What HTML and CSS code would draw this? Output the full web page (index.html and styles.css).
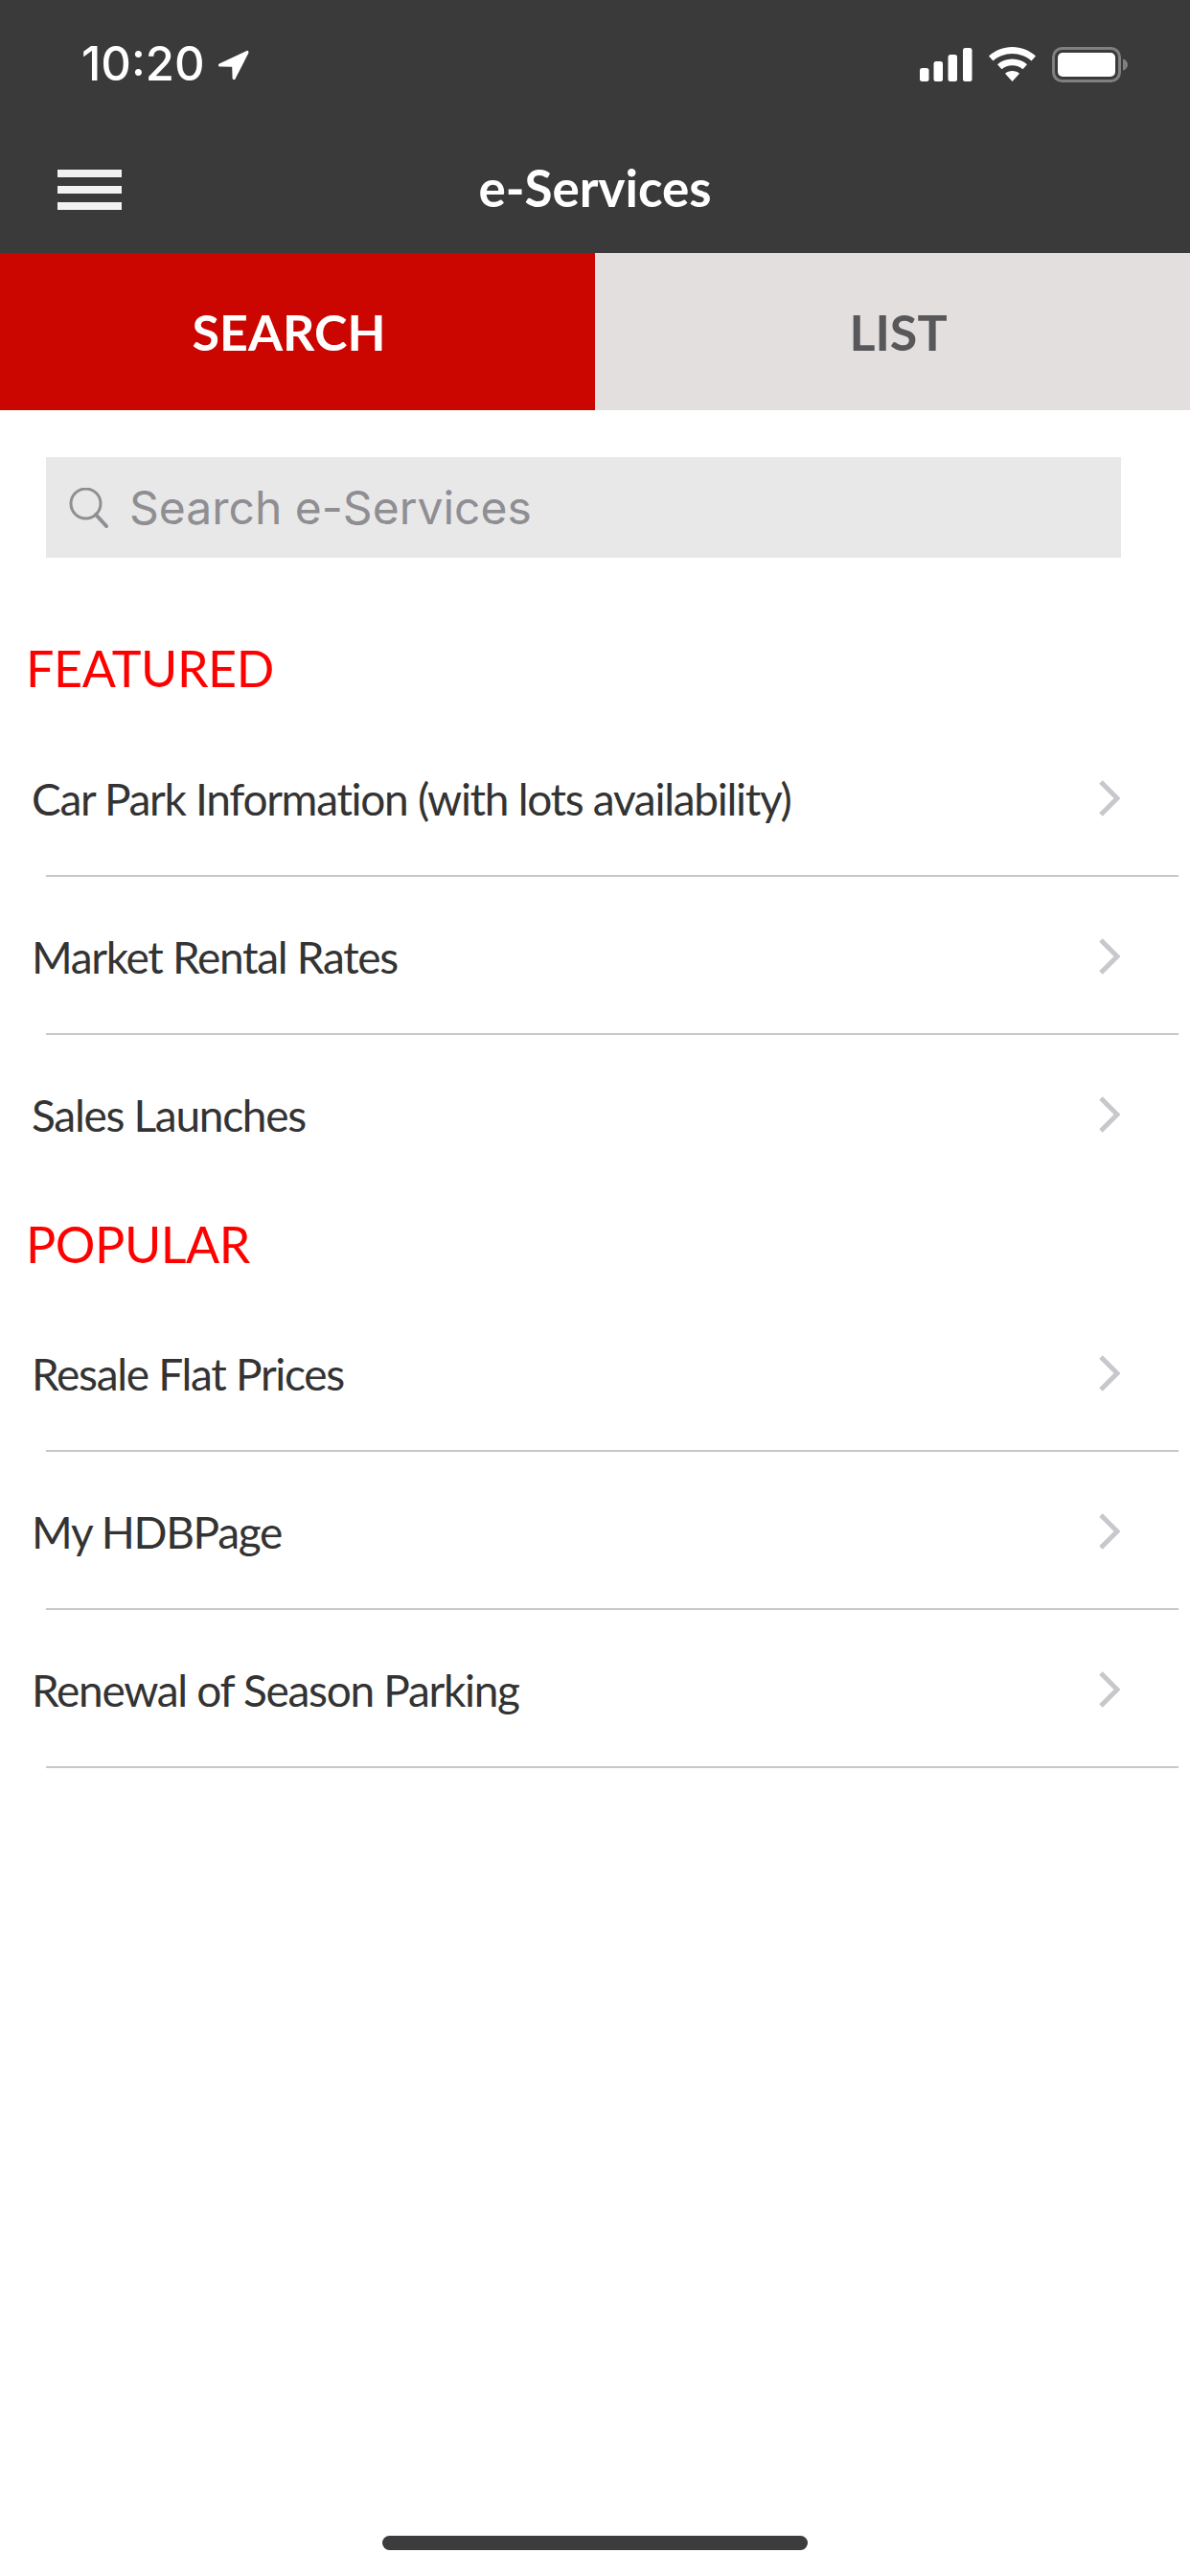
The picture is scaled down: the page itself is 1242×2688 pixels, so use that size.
FILE: index.html
```html
<!DOCTYPE html>
<html lang="en">
<head>
<meta charset="utf-8">
<title>e-Services</title>
<link rel="stylesheet" href="styles.css">
</head>
<body>
<div class="page">
  <header class="top">
    <div class="status">
      <div class="time-wrap">
        <span class="time">10:20</span>
        <svg class="loc" width="33" height="32" viewBox="0 0 33 32"><path d="M30.500 1 1.800 14.500c-1.500.8-1 3 .6 3l12.800.3.4 12c.1 1.500 2.400 2 3 .5L32.300 3.500c.5-1.600-.6-3.100-1.800-2.500z" fill="#fff"/></svg>
      </div>
      <div class="status-icons">
        <svg width="55" height="36" viewBox="0 0 55 36"><g fill="#fff"><rect x="0" y="22" width="9.500" height="14" rx="2.500"/><rect x="14.500" y="15" width="9.500" height="21" rx="2.500"/><rect x="29.500" y="8" width="9.500" height="28" rx="2.500"/><rect x="45" y="1" width="9.500" height="35" rx="2.500"/></g></svg>
        <svg width="49" height="36" viewBox="0 0 49 36"><g fill="#fff"><path d="M24.500 0C15 0 7 3.500 0 9.500l4.500 5C10 9.800 17 7 24.500 7S39 9.800 44.500 14.500l4.500-5C42 3.500 34 0 24.500 0z"/><path d="M24.500 12.500c-6 0-11.500 2.200-15.500 5.700l4.500 5c3-2.500 6.800-4 11-4s8 1.500 11 4l4.500-5c-4-3.500-9.500-5.700-15.500-5.700z"/><path d="M24.500 25c-3 0-5.500 1-7.500 2.700L24.500 36l7.500-8.300c-2-1.700-4.500-2.700-7.500-2.700z"/></g></svg>
        <svg width="79" height="37" viewBox="0 0 79 37"><rect x="1.500" y="1.500" width="69" height="34" rx="9" fill="none" stroke="#808080" stroke-width="3"/><rect x="6" y="6" width="60" height="25" rx="5" fill="#fff"/><path d="M74 12.500c3 .8 5 3 5 6s-2 5.200-5 6z" fill="#808080"/></svg>
      </div>
    </div>
    <nav class="nav">
      <div class="burger"><span></span><span></span><span></span></div>
      <h1 class="title">e-Services</h1>
    </nav>
  </header>
  <div class="tabs">
    <div class="tab tab-on">SEARCH</div>
    <div class="tab tab-off">LIST</div>
  </div>
  <div class="search-wrap">
    <div class="search">
      <svg class="glass" width="42" height="42" viewBox="0 0 42 42"><circle cx="17.500" cy="16.500" r="15.500" fill="none" stroke="#8e8e93" stroke-width="3"/><path d="M28 28 39 40" fill="none" stroke="#8e8e93" stroke-width="4" stroke-linecap="round"/></svg>
      <span class="placeholder">Search e-Services</span>
    </div>
  </div>
  <h2 class="section sec-featured">FEATURED</h2>
  <ul class="list">
    <li class="row ruled"><span class="label">Car Park Information (with lots availability)</span><svg class="chev" width="22" height="38" viewBox="0 0 22 38"><path d="M2 2 19 19 2 36" fill="none" stroke="#c7c7cc" stroke-width="5"/></svg></li>
    <li class="row ruled"><span class="label">Market Rental Rates</span><svg class="chev" width="22" height="38" viewBox="0 0 22 38"><path d="M2 2 19 19 2 36" fill="none" stroke="#c7c7cc" stroke-width="5"/></svg></li>
    <li class="row"><span class="label">Sales Launches</span><svg class="chev" width="22" height="38" viewBox="0 0 22 38"><path d="M2 2 19 19 2 36" fill="none" stroke="#c7c7cc" stroke-width="5"/></svg></li>
  </ul>
  <h2 class="section sec-popular">POPULAR</h2>
  <ul class="list">
    <li class="row ruled"><span class="label">Resale Flat Prices</span><svg class="chev" width="22" height="38" viewBox="0 0 22 38"><path d="M2 2 19 19 2 36" fill="none" stroke="#c7c7cc" stroke-width="5"/></svg></li>
    <li class="row ruled"><span class="label">My HDBPage</span><svg class="chev" width="22" height="38" viewBox="0 0 22 38"><path d="M2 2 19 19 2 36" fill="none" stroke="#c7c7cc" stroke-width="5"/></svg></li>
    <li class="row ruled"><span class="label">Renewal of Season Parking</span><svg class="chev" width="22" height="38" viewBox="0 0 22 38"><path d="M2 2 19 19 2 36" fill="none" stroke="#c7c7cc" stroke-width="5"/></svg></li>
  </ul>
  <div class="home-bar"></div>
</div>
</body>
</html>
```
FILE: styles.css
```css
* { box-sizing: border-box; margin: 0; padding: 0; }
html, body { width: 1242px; height: 2688px; background: #fff; overflow: hidden; }
body { font-family: "Lato", "Open Sans", sans-serif; }
.page { position: relative; width: 1242px; height: 2688px; }
.top { height: 264px; background: #3a3a3a; color: #fff; display: flex; flex-direction: column; }
.status { height: 132px; padding: 45px 65px 0 85px; display: flex; justify-content: space-between; align-items: flex-start; }
.time-wrap { display: flex; align-items: flex-start; gap: 13px; }
.time { font-family: "Inter", sans-serif; font-size: 49px; line-height: 44px; font-weight: 500; }
.loc { margin-top: 7px; }
.status-icons { display: flex; align-items: flex-start; gap: 17px; padding-top: 4px; }
.nav { position: relative; height: 132px; display: flex; align-items: center; justify-content: center; }
.burger { position: absolute; left: 60px; top: 45px; width: 67px; display: flex; flex-direction: column; gap: 9px; }
.burger span { display: block; height: 8px; background: #f2f2f2; }
.title { font-size: 53px; font-weight: 700; line-height: 60px; margin-top: -5px; }
.tabs { display: flex; height: 164px; }
.tab { flex: 0 0 50%; display: flex; align-items: center; justify-content: center; font-size: 52px; font-weight: 700; }
.tab-on { background: #cb0500; color: #fff; padding-right: 18px; }
.tab-off { background: #e2dfde; color: #58585a; padding-left: 12px; }
.search-wrap { padding: 49px 72px 0 48px; }
.search { height: 105px; background: #e8e8e8; display: flex; align-items: center; padding-left: 24px; gap: 21px; }
.placeholder { font-family: "Inter", sans-serif; font-size: 48px; color: #8e8e93; }
.section { font-size: 52px; font-weight: 400; color: #f00; padding-left: 27px; line-height: 60px; letter-spacing: -0.4px; }
.sec-featured { margin-top: 85px; margin-bottom: 23px; }
.sec-popular { margin-top: 23px; margin-bottom: 22px; }
.list { list-style: none; }
.row { position: relative; height: 165px; display: flex; align-items: center; justify-content: space-between; padding: 0 73px 0 33px; font-size: 46px; letter-spacing: -1.3px; color: #333; }
.label { margin-top: 2px; }
.ruled::after { content: ""; position: absolute; left: 48px; right: 12px; bottom: 0; height: 2px; background: #c8c8c8; }
.chev { flex: none; }
.home-bar { position: absolute; left: 399px; top: 2646px; width: 444px; height: 15px; border-radius: 8px; background: #3c3c3e; }
```
